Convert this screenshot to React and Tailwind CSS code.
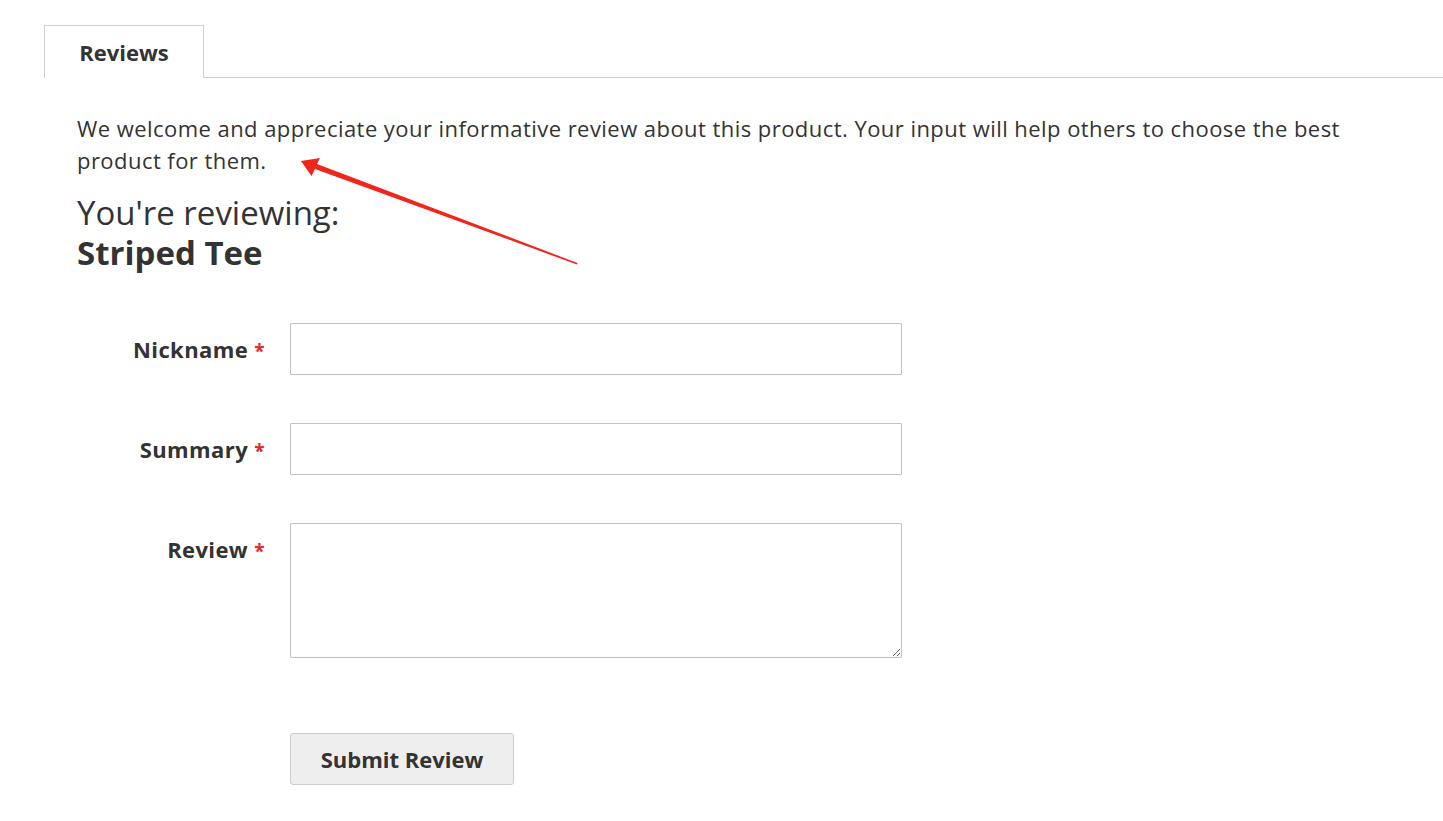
export default function App() {
  const fields = [
    { label: 'Nickname', type: 'input' },
    { label: 'Summary', type: 'input' },
    { label: 'Review', type: 'textarea' },
  ];

  return (
    <div className="relative min-h-[821px] bg-white text-[#333] font-['Open_Sans',sans-serif]">
      {/* Tabs */}
      <div className="flex pt-[25px] pl-[44px]">
        <div className="w-[160px] h-[53px] border border-b-0 border-[#d1d1d1] bg-white flex items-center justify-center text-[22px] font-bold text-[#333]">
          Reviews
        </div>
        <div className="flex-1 border-b border-[#d1d1d1]" />
      </div>

      {/* Content */}
      <div className="pl-[77px] pt-[34px]">
        <p className="max-w-[1310px] text-[22px] leading-[32px] tracking-[0.45px] text-[#333]">
          We welcome and appreciate your informative review about this product. Your input will help others to choose the best product for them.
        </p>

        <div className="mt-[17px] text-[33px]">
          <div className="font-normal leading-[40px]">You're reviewing:</div>
          <div className="font-bold leading-[40px]">Striped Tee</div>
        </div>

        <form className="mt-[50px] flex flex-col gap-[48px]" onSubmit={(e) => e.preventDefault()}>
          {fields.map((f) => (
            <div key={f.label} className="flex items-start">
              <label className="w-[188px] pt-[10px] text-right text-[22px] leading-[32px] font-bold tracking-[0.4px] text-[#333] whitespace-nowrap">
                {f.label} <span className="text-[#e02b27] text-[19px]">*</span>
              </label>
              <div className="ml-[25px]">
                {f.type === 'input' ? (
                  <input className="w-[612px] h-[52px] border border-[#c2c2c2] rounded-[1px] px-3 text-[20px] outline-none" />
                ) : (
                  <textarea className="block w-[612px] h-[135px] border border-[#c2c2c2] rounded-[1px] px-3 py-2 text-[20px] outline-none" />
                )}
              </div>
            </div>
          ))}

          <div className="pl-[213px] mt-[27px]">
            <button
              type="submit"
              className="w-[224px] h-[52px] bg-[#eee] border border-[#cdcdcd] rounded-[3px] text-[22px] font-bold text-[#333]"
            >
              Submit Review
            </button>
          </div>
        </form>
      </div>

      {/* Annotation arrow */}
      <svg className="absolute left-0 top-0 pointer-events-none" width="1443" height="821">
        <polygon
          points="301,161 311.5,176 315,169 577,264.5 577.5,263 317,164 320,158"
          fill="#f0251b"
        />
      </svg>
    </div>
  );
}
